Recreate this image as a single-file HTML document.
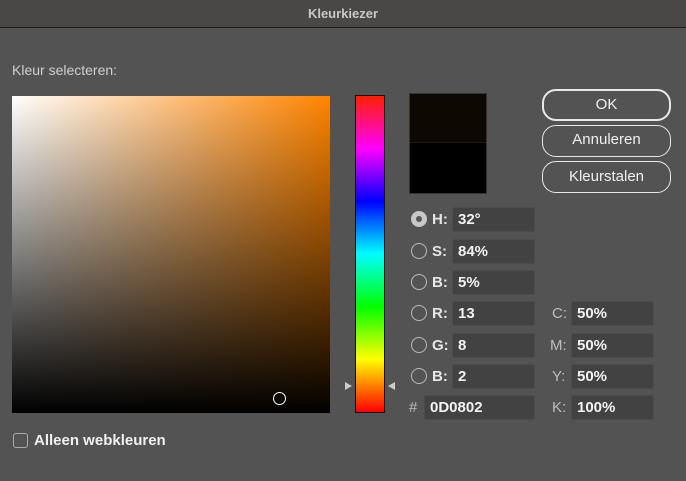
<!DOCTYPE html><html><head><style>
*{margin:0;padding:0;box-sizing:border-box}
body{width:686px;height:481px;background:#535353;font-family:"Liberation Sans",sans-serif;position:relative;overflow:hidden;color:#e8e8e8}
.a{position:absolute}
.title{left:0;top:0;width:686px;height:28px;background:#4a4846;border-bottom:1px solid #1e1e1e;text-align:center;font-size:13px;font-weight:bold;color:#c8c8c8;line-height:28px}
.lbl{font-size:14px;color:#cfcfcf}
.btn{left:542px;width:129px;border:2px solid #e8e8e8;border-radius:14px;text-align:center;font-size:15px;color:#f0f0f0;}
.inp{background:#424242;border:1px solid #4c4c4c;border-radius:2px;height:25px;font-size:15px;font-weight:bold;color:#f2f2f2;line-height:23px;padding-left:5px}
.rad{width:16px;height:16px;border:1.5px solid #bbb;border-radius:50%;left:411px}
.k{font-size:15px;font-weight:bold;color:#e6e6e6}
.k2{font-size:15px;color:#bdbdbd}
</style></head><body>
<div class="a title">Kleurkiezer</div>
<div class="a lbl" style="left:12px;top:62px;font-size:14px">Kleur selecteren:</div>
<div class="a" style="left:12px;top:96px;width:318px;height:317px;background:linear-gradient(to bottom,rgba(0,0,0,0),#000),linear-gradient(to right,#fff,#ff8400)"></div>
<div class="a" style="left:273px;top:392px;width:13px;height:13px;border:1.5px solid #fff;border-radius:50%"></div>
<div class="a" style="left:355px;top:95px;width:30px;height:318px;border:1px solid #111;background:linear-gradient(to bottom,#ff2000 0%,#ff00ff 16.7%,#0000ff 33.3%,#00ffff 50%,#00ff00 66.7%,#ffff00 83.3%,#ff0000 100%)"></div>
<div class="a" style="left:345px;top:382px;width:0;height:0;border-top:4px solid transparent;border-bottom:4px solid transparent;border-left:7px solid #ccc"></div>
<div class="a" style="left:388px;top:382px;width:0;height:0;border-top:4px solid transparent;border-bottom:4px solid transparent;border-right:7px solid #ccc"></div>
<div class="a" style="left:409px;top:93px;width:78px;height:101px;border:1px solid #333;background:#000"><div style="height:49px;background:#0d0802;border-bottom:1px solid #1c1712"></div></div>
<div class="a btn" style="top:89px;height:32px;line-height:28px">OK</div>
<div class="a btn" style="top:125px;height:32px;line-height:28px;border-width:1px">Annuleren</div>
<div class="a btn" style="top:161px;height:32px;line-height:30px;border-width:1px">Kleurstalen</div>
<div class="a" style="left:411px;top:211px;width:16px;height:16px;border-radius:50%;background:#c8c8c8"><div style="margin:5px;width:6px;height:6px;border-radius:50%;background:#555"></div></div>
<div class="a rad" style="top:243px"></div><div class="a rad" style="top:274px"></div><div class="a rad" style="top:305px"></div><div class="a rad" style="top:337px"></div><div class="a rad" style="top:368px"></div>
<div class="a k" style="left:432px;top:211px">H:</div><div class="a inp" style="left:452px;top:207px;width:83px">32°</div>
<div class="a k" style="left:432px;top:243px">S:</div><div class="a inp" style="left:452px;top:239px;width:83px">84%</div>
<div class="a k" style="left:432px;top:274px">B:</div><div class="a inp" style="left:452px;top:270px;width:83px">5%</div>
<div class="a k" style="left:432px;top:305px">R:</div><div class="a inp" style="left:452px;top:301px;width:83px">13</div>
<div class="a k" style="left:432px;top:337px">G:</div><div class="a inp" style="left:452px;top:333px;width:83px">8</div>
<div class="a k" style="left:432px;top:368px">B:</div><div class="a inp" style="left:452px;top:364px;width:83px">2</div>
<div class="a k2" style="left:409px;top:399px">#</div><div class="a inp" style="left:424px;top:395px;width:111px">0D0802</div>
<div class="a k2" style="left:552px;top:305px">C:</div><div class="a inp" style="left:571px;top:301px;width:83px">50%</div>
<div class="a k2" style="left:550px;top:337px">M:</div><div class="a inp" style="left:571px;top:333px;width:83px">50%</div>
<div class="a k2" style="left:552px;top:368px">Y:</div><div class="a inp" style="left:571px;top:364px;width:83px">50%</div>
<div class="a k2" style="left:552px;top:399px">K:</div><div class="a inp" style="left:571px;top:395px;width:83px">100%</div>
<div class="a" style="left:13px;top:433px;width:15px;height:15px;border:1.5px solid #aaa;border-radius:3px"></div>
<div class="a" style="left:34px;top:432px;font-size:15px;font-weight:bold;color:#f0f0f0">Alleen webkleuren</div>
</body></html>
